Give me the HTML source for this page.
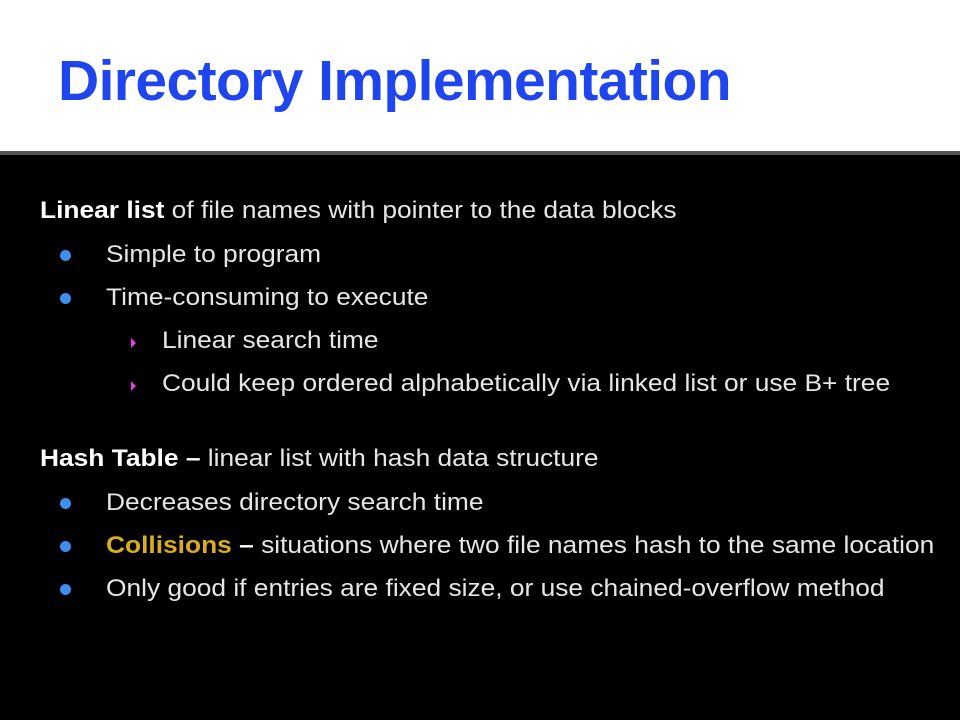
<!DOCTYPE html>
<html><head><meta charset="utf-8"><style>
body{margin:0;width:960px;height:720px;overflow:hidden;background:#000;position:relative;font-family:"Liberation Sans",Arial,sans-serif}
#top{position:absolute;left:0;top:0;width:960px;height:151px;background:#fff}
#line{position:absolute;left:0;top:151px;width:960px;height:4px;background:#555}
h1{position:absolute;left:58px;top:53px;margin:0;font-size:57px;font-weight:bold;color:#1f45ee;letter-spacing:-0.6px;line-height:1}
.t{position:absolute;font-size:24px;color:#e6e6e6;white-space:nowrap;line-height:1;transform:scaleX(1.097);transform-origin:0 0}
.t b{color:#fff}
.d{position:absolute;width:11px;height:11px;border-radius:50%;background:#3d8ff2}
.a{position:absolute;width:0;height:0;border-top:5px solid transparent;border-bottom:5px solid transparent;border-left:5px solid #e23ee8}
</style></head><body>
<div id="top"></div><div id="line"></div>
<h1>Directory Implementation</h1>
<div class="t" style="left:40px;top:199px"><b>Linear list</b> of file names with pointer to the data blocks</div>
<div class="d" style="left:60px;top:250px"></div><div class="t" style="left:106px;top:243px">Simple to program</div>
<div class="d" style="left:60px;top:293px"></div><div class="t" style="left:106px;top:286px">Time-consuming to execute</div>
<div class="a" style="left:131px;top:338px"></div><div class="t" style="left:162px;top:329px">Linear search time</div>
<div class="a" style="left:131px;top:381px"></div><div class="t" style="left:162px;top:372px">Could keep ordered alphabetically via linked list or use B+ tree</div>
<div class="t" style="left:40px;top:447px"><b>Hash Table –</b> linear list with hash data structure</div>
<div class="d" style="left:60px;top:498px"></div><div class="t" style="left:106px;top:491px">Decreases directory search time</div>
<div class="d" style="left:60px;top:541px"></div><div class="t" style="left:106px;top:534px"><b style="color:#d9ad1e">Collisions</b> <b>–</b> situations where two file names hash to the same location</div>
<div class="d" style="left:60px;top:584px"></div><div class="t" style="left:106px;top:577px">Only good if entries are fixed size, or use chained-overflow method</div>
</body></html>
